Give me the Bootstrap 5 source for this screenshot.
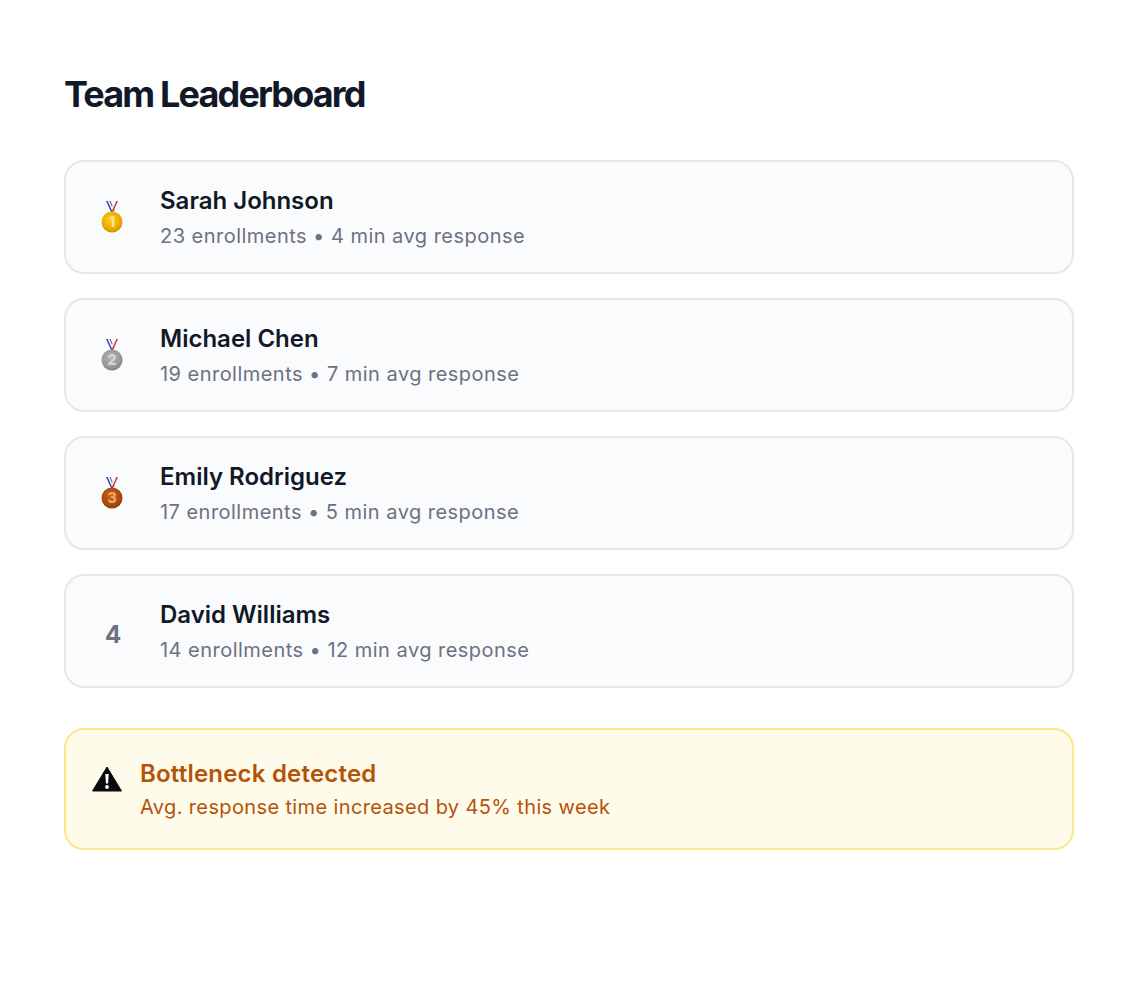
<!DOCTYPE html>
<html lang="en">
<head>
    <meta charset="UTF-8">
    <meta name="viewport" content="width=device-width, initial-scale=1.0">
    <title>Team Leaderboard</title>
    <link href="https://cdn.jsdelivr.net/npm/bootstrap@5.3.0/dist/css/bootstrap.min.css" rel="stylesheet">
    <style>
        body { font-family: Inter, "Liberation Sans", sans-serif; background: #fff; }
        .page { padding: 72px 64px 0; }
        .page-title { font-size: 36px; line-height: 44px; font-weight: 700; letter-spacing: -1.85px; color: #111827; margin-bottom: 44px; }
        .member { height: 114px; padding: 0 24px; gap: 24px; background: #fafbfd; border: 2px solid #e5e7eb; border-radius: 20px; margin-bottom: 24px; }
        .rank { width: 46px; font-size: 24px; font-weight: 700; color: #6b7280; }
        .rank-plain { padding-top: 8px; }
        .name { font-size: 24px; line-height: 32px; font-weight: 600; color: #111827; }
        .stats { font-size: 20px; line-height: 28px; color: #6b7280; margin-top: 5px; letter-spacing: 0.47px; }
        .warning-box { height: 122px; margin-top: 40px; padding: 0 26px; gap: 18px; background: #fffbeb; border: 2px solid #fde68a; border-radius: 20px; color: #b45309; }
        .warning-icon { margin-bottom: 20px; }
        .warning-title { font-size: 24px; line-height: 32px; font-weight: 600; letter-spacing: 0.2px; }
        .warning-text { font-size: 20px; line-height: 28px; margin-top: 3px; letter-spacing: 0.37px; }
        .medal-num { font-family: Inter, "Liberation Sans", sans-serif; font-size: 14px; font-weight: 800; text-anchor: middle; }
    </style>
</head>
<body>
    <svg width="0" height="0" class="position-absolute">
        <defs>
            <radialGradient id="gold" cx="45%" cy="40%" r="65%"><stop offset="0" stop-color="#fcd21c"/><stop offset="0.7" stop-color="#eba800"/><stop offset="1" stop-color="#c98500"/></radialGradient>
            <radialGradient id="silver" cx="45%" cy="40%" r="65%"><stop offset="0" stop-color="#b5b5b5"/><stop offset="0.7" stop-color="#979797"/><stop offset="1" stop-color="#7b7b7b"/></radialGradient>
            <radialGradient id="bronze" cx="45%" cy="40%" r="65%"><stop offset="0" stop-color="#c8641c"/><stop offset="0.7" stop-color="#a84a0c"/><stop offset="1" stop-color="#863604"/></radialGradient>
            <g id="ribbon">
                <path d="M6 1h1.800L13 12.500h-1.800z" fill="#3949ab"/>
                <path d="M7.800 1h1.500L14 11.500l-1 1z" fill="#f5f5f5"/>
                <path d="M9.300 1h1.300L14.500 10l-.5 1.500z" fill="#5c6bc0"/>
                <path d="M18 1h-1.800L11 12.500h1.800z" fill="#d8343c"/>
                <path d="M16.200 1h-1.500L11.500 8.500l.7 1.500z" fill="#f5f5f5"/>
            </g>
        </defs>
    </svg>

    <div class="page">
        <h1 class="page-title">Team Leaderboard</h1>

        <div class="member d-flex align-items-center">
            <div class="rank text-center flex-shrink-0">
                <svg width="24" height="36" viewBox="1 0 24 36"><use href="#ribbon"/><circle cx="12" cy="22" r="10.500" fill="url(#gold)"/><text class="medal-num" x="12" y="27" fill="#fde68a">1</text></svg>
            </div>
            <div>
                <div class="name">Sarah Johnson</div>
                <div class="stats">23 enrollments • 4 min avg response</div>
            </div>
        </div>

        <div class="member d-flex align-items-center">
            <div class="rank text-center flex-shrink-0">
                <svg width="24" height="36" viewBox="1 0 24 36"><use href="#ribbon"/><circle cx="12" cy="22" r="10.500" fill="url(#silver)"/><text class="medal-num" x="12" y="27" fill="#d6d6d6">2</text></svg>
            </div>
            <div>
                <div class="name">Michael Chen</div>
                <div class="stats">19 enrollments • 7 min avg response</div>
            </div>
        </div>

        <div class="member d-flex align-items-center">
            <div class="rank text-center flex-shrink-0">
                <svg width="24" height="36" viewBox="1 0 24 36"><use href="#ribbon"/><circle cx="12" cy="22" r="10.500" fill="url(#bronze)"/><text class="medal-num" x="12" y="27" fill="#f0a868">3</text></svg>
            </div>
            <div>
                <div class="name">Emily Rodriguez</div>
                <div class="stats">17 enrollments • 5 min avg response</div>
            </div>
        </div>

        <div class="member d-flex align-items-center">
            <div class="rank rank-plain text-center flex-shrink-0">4</div>
            <div>
                <div class="name">David Williams</div>
                <div class="stats">14 enrollments • 12 min avg response</div>
            </div>
        </div>

        <div class="warning-box d-flex align-items-center">
            <svg class="warning-icon flex-shrink-0" width="30" height="26" viewBox="0 0 30 26">
                <path d="M15 1 29.500 25H.5z" fill="#0a0a0a" stroke="#0a0a0a" stroke-linejoin="round"/>
                <path d="M13.300 8h3.400l-.6 9.500h-2.200z" fill="#fff"/>
                <circle cx="15" cy="21" r="1.900" fill="#fff"/>
            </svg>
            <div>
                <div class="warning-title">Bottleneck detected</div>
                <div class="warning-text">Avg. response time increased by 45% this week</div>
            </div>
        </div>
    </div>

    <script src="https://cdn.jsdelivr.net/npm/bootstrap@5.3.0/dist/js/bootstrap.bundle.min.js"></script>
</body>
</html>
